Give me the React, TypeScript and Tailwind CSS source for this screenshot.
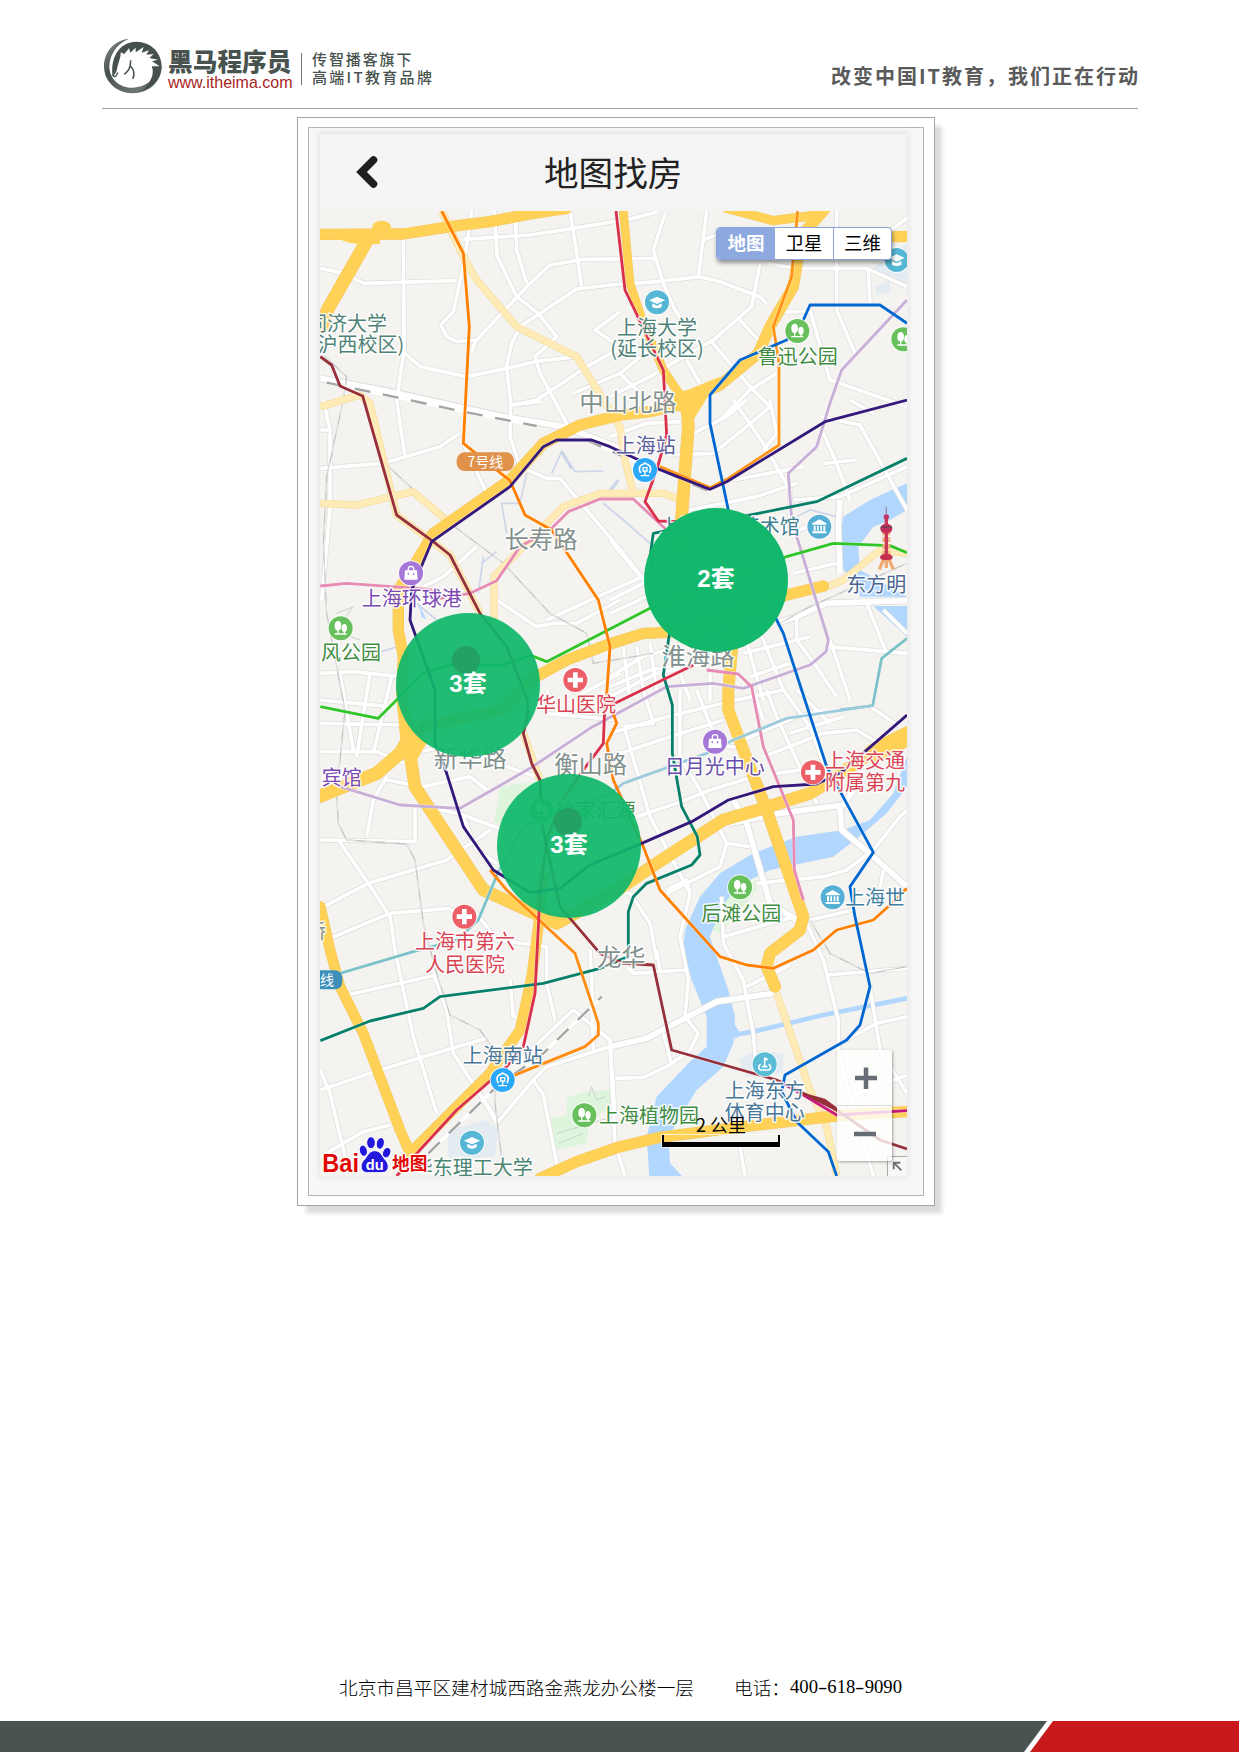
import React from "react";

const SANS = '"Noto Sans CJK SC", sans-serif';

type Pt = string;

/* Map drawing units: three per pixel. */

const water: Pt[] = [
  "1851,1940 1810,2050 1740,2130 1660,2160 1520,2180 1390,2230 1290,2290 1230,2360 1185,2460 1178,2530 1190,2550 1205,2610 1250,2720 1250,2810 1195,2860 1100,2960 1070,3080 1078,3200 1178,3200 1140,3160 1135,3080 1220,2940 1300,2870 1330,2800 1335,2720 1315,2640 1280,2540 1260,2480 1290,2400 1340,2330 1440,2280 1630,2240 1720,2170 1790,2110 1851,2030",
  "1851,1120 1740,1170 1660,1220 1648,1290 1660,1380 1700,1410 1710,1460 1851,1460 1800,1430 1710,1380 1705,1310 1750,1250 1800,1230 1851,1200",
  "1750,1488 1851,1488 1851,1580",
];

const greens: Pt[] = [
  "630,2030 760,2010 800,2150 612,2140",
  "780,3025 830,3015 830,2965 880,2945 960,2940 965,3000 900,3020 890,3100 800,3120",
  "1240,2450 1310,2360 1400,2310 1400,2340 1290,2470",
];
const campuses: Pt[] = [
  "475,3060 590,3030 625,3060 615,3140 475,3150",
  "1345,2850 1400,2820 1480,2830 1480,2890 1370,2900",
  "1740,480 1851,400 1851,520 1760,490",
  "1755,530 1800,510 1800,550 1760,555",
];

const minor: Pt[] = [
  "545,303 525,440 500,560 490,605 452,645 470,680 500,695 555,690",
  "612,303 622,440 680,560 745,610 800,680 735,740 750,790 830,940 820,950",
  "677,335 680,420 710,520",
  "840,303 855,400 875,530",
  "520,388 610,382 720,375 850,355 1000,330",
  "340,380 342,720 325,840 320,870 345,1040",
  "91,475 160,490 222,520 500,512",
  "545,730 555,695 715,525 780,465 880,448 1100,445",
  "960,525 860,537 690,650 665,700 650,770 662,880 660,980 690,1070 770,1105 810,1105 1000,1330 1070,1420",
  "345,730 390,770 530,800 650,775 735,755 860,740",
  "990,605 915,660 990,710",
  "670,885 740,870 890,770 990,715",
  "850,850 990,790 1090,710",
  "960,525 1100,515 1230,500 1290,515 1410,560 1430,580",
  "1010,330 1105,305",
  "1125,310 1090,420 1120,520 1155,600 1190,650",
  "1250,303 1225,500",
  "1240,390 1290,370",
  "1410,460 1385,590 1270,690 1180,740 1080,800 960,860",
  "1345,625 1405,690",
  "1260,690 1380,830 1440,890",
  "1430,460 1520,475 1630,475 1730,475 1851,530",
  "1640,303 1640,600 1695,730",
  "1735,480 1740,580",
  "1851,325 1790,370",
  "1560,600 1620,810 1851,890",
  "990,790 1040,840",
  "1190,750 1230,820",
  "1290,930 1330,890 1380,840 1460,790",
  "1460,605 1560,605",
  "91,1075 280,1060 450,1010 510,970",
  "100,870 120,960 120,1200 95,1470",
  "91,960 115,960",
  "660,885 750,875",
  "520,1000 590,1150",
  "400,1430 460,1400 560,1310",
  "620,1470 740,1550 790,1540 860,1540 990,1470",
  "770,1530 990,1430 1080,1390",
  "91,1690 190,1685 330,1700",
  "770,1740 800,1800 950,1810",
  "990,1690 860,1760",
  "960,980 1070,940 1170,935",
  "1210,970 1310,920 1370,870",
  "1330,870 1420,1000 1500,1140 1500,1230",
  "1130,1035 1270,1030 1370,950 1440,890",
  "1440,870 1460,970 1420,1020",
  "1590,920 1710,945 1790,1090 1851,1200",
  "1200,1200 1400,1160 1520,1120",
  "1330,1110 1540,1070",
  "1600,970 1640,1060 1680,1170",
  "1510,1170 1650,1160 1851,1070",
  "1600,1060 1700,1050",
  "1500,1270 1580,1240",
  "1510,1390 1640,1360",
  "1680,870 1750,910",
  "1520,1520 1520,1590 1580,1670 1640,1760",
  "1610,1610 1851,1630",
  "1620,1590 1680,1770",
  "1730,1480 1790,1630",
  "1780,1500 1851,1570",
  "960,1470 1080,1410",
  "960,1510 1070,1460",
  "960,1290 1060,1410",
  "960,1700 1060,1640 1160,1610",
  "960,1730 1080,1680 1250,1650",
  "1000,1610 1020,1770",
  "1040,1610 1060,1740",
  "1080,1600 1100,1740",
  "1160,1660 1200,1770",
  "1260,1690 1260,1770",
  "1360,1560 1420,1770",
  "1400,1540 1480,1740",
  "1360,1630 1560,1580",
  "1380,1700 1500,1660",
  "960,1760 1100,1690 1340,1640",
  "150,1690 190,1920",
  "240,1690 200,1940",
  "305,1700 250,1930",
  "91,1840 340,1845",
  "91,1770 300,1790",
  "91,1925 260,1925 340,1960",
  "290,2000 250,2070 230,2180",
  "91,2190 375,2195 375,2095",
  "145,2190 235,2320 300,2420 315,2520 340,2640 370,2780 440,3010",
  "91,2395 235,2320 470,2250 600,2160",
  "120,2485 300,2410 480,2395",
  "410,2090 520,2115 640,2160",
  "370,1930 480,1905 620,1960 740,2000",
  "290,2010 400,2030 540,2000 590,2040",
  "480,2400 560,2410 620,2490 770,2510 770,2620 795,2730",
  "520,2120 560,2220 620,2260",
  "760,1810 990,1830",
  "960,1870 1130,1820 1340,1770 1480,1740",
  "1005,1860 1080,2120 1200,2350",
  "1060,1740 1090,1840 1000,1850",
  "960,1940 1140,1880 1300,1830",
  "1170,1740 1170,1940 1230,2040 1310,2200",
  "1220,1740 1290,1920",
  "1040,2120 1160,2080 1260,2040 1390,2000",
  "1280,1910 1360,1910",
  "1360,1890 1520,1820 1600,1800",
  "1390,1740 1420,1830",
  "1430,1740 1460,1820 1580,2080",
  "1480,1740 1560,1850 1600,1960",
  "1520,1740 1620,1840",
  "1500,1870 1660,1820",
  "1420,1940 1600,1870 1700,1860 1800,1920",
  "1460,1990 1600,1970",
  "1310,2200 1380,2210",
  "960,2340 1020,2350 1080,2440 1100,2550",
  "1130,2340 1190,2310 1200,2350 1170,2480 1195,2610 1185,2720 1225,2770 1200,2820 1140,2865 1060,2902 975,2905",
  "1130,2350 1290,2270 1310,2200",
  "1400,2320 1600,2300 1670,2280 1750,2220 1830,2120 1851,2100",
  "1300,2480 1510,2420",
  "1295,2360 1300,2500 1360,2610 1390,2770 1400,2900",
  "1560,2430 1690,2400",
  "1550,2440 1600,2550 1645,2730 1645,2820 1680,2960 1750,3198",
  "1780,2280 1770,2340",
  "1740,1790 1830,1850",
  "170,2655 440,2595",
  "91,2940 270,2880 400,2840 590,2785",
  "91,2880 120,2950 165,3140 170,3198",
  "91,3140 220,3065 300,3045",
  "430,2590 470,2700 490,2830 620,3030",
  "575,2960 620,3040 730,2910 760,2955 800,3160 810,3198",
  "730,2910 770,2870 990,2800",
  "660,2610 670,2720 690,2720",
  "690,2850 850,2700 960,2790 975,3020",
  "900,2520 905,2600 910,2820",
  "960,2810 975,3100 1005,3198",
  "1010,2570 1030,2590 1185,2580",
  "1100,2520 1110,2580",
  "1370,2630 1500,2565",
  "1610,2595 1851,2575",
  "1740,2630 1770,2820 1851,2950",
  "1650,2800 1760,2740 1851,2720",
  "1680,2960 1851,2895",
  "1120,2770 1145,2865",
  "1350,3110 1365,3198",
];

const wide: Pt[] = [
  "91,805 300,845 640,920 820,950 900,980 1000,1020",
  "1460,1540 1520,1520 1610,1480 1851,1472",
  "1320,2140 1470,2110 1660,2085 1720,2000",
  "1650,2090 1655,2160 1750,2240 1851,2330",
  "1330,2070 1370,2140 1440,2380 1520,2430",
  "960,2810 1070,2785 1280,2675 1450,2650",
  "1650,1170 1645,1250 1650,1390",
];

const pale: Pt[] = [
  "520,440 560,510 680,650 860,740 940,870 990,950 1005,1050 1030,1150",
  "91,1180 200,1185 370,1145 480,1240",
  "91,890 210,855 240,880 320,1215 480,1335 570,1510",
  "612,1540 612,1400 700,1310 820,1190 930,1150 1120,1150 1175,1170",
  "1600,1435 1660,1410 1770,1320 1851,1330",
  "1460,2650 1560,2940 1610,3050 1640,3198",
  "455,303 520,440",
  "700,1870 750,2010",
];

const arterial: { d: Pt; w: number }[] = [
  { d: "91,373 340,372 480,350 600,335 720,312 830,295", w: 32 },
  { d: "232,390 112,600 98,650", w: 38 },
  { d: "1310,295 1450,332 1560,318 1610,295", w: 26 },
  { d: "1600,303 1535,375 1510,530 1440,650 1405,730 1290,825 1185,870", w: 32 },
  { d: "1000,303 1020,520 1060,640 1120,780 1180,870", w: 24 },
  { d: "1190,860 1195,950 1175,1220 1165,1300", w: 36 },
  { d: "1190,880 1080,905 990,915 870,945 760,1000 660,1110 430,1270 370,1370 325,1440 325,1560 340,1640 335,1750 352,1930", w: 32 },
  { d: "365,1870 330,1930 260,1990 91,2058", w: 38 },
  { d: "355,1900 375,2030 580,2340 800,2440 990,2335 1100,2260 1300,2130 1420,2095 1560,2050 1640,2000 1740,1930 1851,1880", w: 36 },
  { d: "1750,1930 1870,1870", w: 56 },
  { d: "370,1900 400,1850 640,1800 720,1710 830,1650 950,1605 1060,1570 1200,1565 1490,1455 1600,1428", w: 32 },
  { d: "1330,1570 1315,1740 1315,1800 1360,1920 1430,2100 1540,2420 1530,2460 1440,2530 1430,2570 1455,2630", w: 34 },
  { d: "750,3205 860,3155 990,3110 1110,3082 1360,3050 1660,3015 1851,3005", w: 32 },
  { d: "91,2390 120,2520 150,2630 220,2770 330,3060 360,3130 600,2890 690,2760 725,2600 745,2450 760,2300", w: 30 },
  { d: "1800,380 1860,380", w: 32 },
];

const metro: { c: string; d: Pt }[] = [
  { c: "#c7afd8", d: "1851,570 1655,780 1620,880 1580,1010 1495,1090 1505,1230 1615,1590 1608,1625 1560,1665 1360,1735 1270,1720 1130,1730 900,1855 720,1975 510,2095 330,2085 150,2030" },
  { c: "#e58bb4", d: "91,1428 170,1420 420,1438 450,1465 540,1450 620,1412 690,1310 785,1255 835,1205 930,1167 1030,1167 1130,1260" },
  { c: "#e58bb4", d: "1250,1680 1345,1692 1385,1730 1420,1910 1510,2130 1513,2280 1540,2370" },
  { c: "#7cc2c8", d: "1851,1585 1775,1645 1748,1787 1650,1800" },
  { c: "#9dcbdc", d: "1748,1787 1490,1825 1330,1890 1250,1930 1000,2020 960,2050 700,2150 625,2285" },
  { c: "#7cc2c8", d: "625,2285 565,2430 500,2490 370,2525 150,2590" },
  { c: "#30c628", d: "91,1790 265,1825 400,1690 480,1665 640,1665 720,1635 770,1655 1080,1495 1490,1340 1630,1300 1800,1307 1851,1328" },
  { c: "#06806a", d: "1851,1045 1580,1175 1370,1217 1140,1260 1090,1270 1080,1340 1140,1560 1120,1695 1147,1785 1147,1930 1175,2090 1222,2180 1230,2235 1205,2265 1070,2320 1030,2360 1015,2405 1015,2540 930,2575 760,2620 450,2660 400,2695 240,2733 91,2792" },
  { c: "#ff8000", d: "455,303 520,430 538,650 520,1000 660,1112 705,1215 785,1260 925,1470 960,1610 950,1755 980,1840 950,1900 970,2010 1060,2210 1110,2340 1290,2540 1370,2565 1450,2575 1570,2520 1640,2460 1750,2430 1800,2385 1851,2335" },
  { c: "#ff9419", d: "1523,303 1505,500 1450,650 1467,760 1467,1005 1310,1108 1260,1133 1110,1070" },
  { c: "#ff8c10", d: "600,2280 650,2340 855,2530 925,2740 925,2775 885,2810 700,2885 640,2910" },
  { c: "#d9304c", d: "978,303 1005,540 1120,780 1130,975 1100,1080 1065,1175 1105,1233 1160,1235" },
  { c: "#d9304c", d: "1210,1665 975,1780 945,1770 940,1900 880,1980 810,2080 770,2190 750,2350 735,2650 700,2810 650,2870 500,3000 385,3125 320,3198" },
  { c: "#c9197f", d: "1470,2915 1545,2958 1640,3015 1851,3002" },
  { c: "#97303a", d: "91,740 125,765 150,828 218,858 320,1215 430,1295 480,1335 570,1510 650,1610 712,1770 714,1810 700,1870 725,1960 750,2010 755,2140 810,2390 930,2530 1000,2560 1090,2565 1145,2820 1460,2910 1540,2950 1640,3000 1770,3090 1851,3117" },
  { c: "#0067d0", d: "1851,640 1770,585 1560,585 1540,630 1490,690 1350,750 1260,855 1260,940 1315,1200 1460,1530 1480,1570 1535,1740 1610,1970 1750,2227 1680,2330 1695,2420 1740,2630 1710,2745 1670,2790 1485,2895 1475,2945 1520,3035 1615,3125 1640,3198" },
  { c: "#34187a", d: "1851,870 1605,935 1310,1115 1260,1138 1100,1075 960,1010 905,990 800,990 760,1010 660,1130 425,1295 365,1440 360,1530 435,1740 435,1900 470,1990 520,2150 610,2280 720,2348 810,2335 900,2265 1055,2200 1205,2135 1315,2070 1450,2030 1580,2022 1650,1990 1851,1815" },
];

const rails: Pt[] = [
  "110,818 320,862 520,905 740,948",
  "890,990 1000,1040 1110,1080 1260,1145",
  "415,3130 620,2930 760,2830 935,2660",
];
const thinRails: Pt[] = [
  "100,735 170,800 160,870 110,1100 100,1300 110,1510 165,1800 140,2050 145,2140 170,2190 350,2202 375,2250 400,2440 440,2590 480,2715 570,2760 620,2830 615,2980 640,3190",
  "290,1065 480,1240 640,1360 780,1510 890,1570 910,1660 1090,1630",
  "1460,1545 1560,1490 1851,1360",
  "1560,2430 1620,2530 1740,2590 1851,2570",
];

type IconKind = "school" | "park" | "bag" | "hospital" | "museum" | "train" | "sport";

const ICON_FILL: Record<IconKind, string> = {
  school: "#56b7d5",
  park: "#67c05c",
  bag: "#a578d8",
  hospital: "#ec5f68",
  museum: "#56b0d6",
  train: "#2ba9f8",
  sport: "#5bbcd6",
};

function Glyph({ kind }: { kind: IconKind }) {
  switch (kind) {
    case "school":
      return (
        <g fill="#fff">
          <path d="M0-17 24-6 0 5-24-6Z" />
          <path d="M-14 3 0 10 14 3V14Q0 22-14 14Z" />
        </g>
      );
    case "park":
      return (
        <g fill="#fff">
          <ellipse cx="-8" cy="-8" rx="10" ry="14" />
          <ellipse cx="11" cy="-1" rx="8" ry="12" />
          <path d="M-10 0h4v17h-4zM9 6h4v11H9zM-18 15h36v4h-36z" />
        </g>
      );
    case "bag":
      return (
        <g>
          <path d="M-8-8v-5a8 8 0 0 1 16 0v5" fill="none" stroke="#fff" strokeWidth="4" />
          <path d="M-18-9h36l2 28h-40z" fill="#fff" />
          <path d="M-8-2v6M8-2v6" stroke="#a578d8" strokeWidth="4" />
        </g>
      );
    case "hospital":
      return <path d="M-7-23H7V-7H23V7H7V23H-7V7H-23V-7H-7Z" fill="#fff" />;
    case "museum":
      return (
        <g fill="#fff">
          <path d="M0-22 21-10v4h-42v-4zM-17-3h6v15h-6zM-7-3h5v15h-5zM3-3h5v15H3zM12-3h6v15h-6zM-21 14h42v6h-42z" />
        </g>
      );
    case "train":
      return (
        <g fill="none" stroke="#fff" strokeWidth="5">
          <path d="M-13 9C-22-8-14-14-6-17L0-21 6-17C14-14 22-8 13 9" />
          <path d="M-6 3V-7H6V3ZM0 4V16M-13 17H13" strokeWidth="4" />
        </g>
      );
    case "sport":
      return (
        <g fill="none" stroke="#fff" strokeWidth="5">
          <path d="M-12 0C-20 4-20 16-10 17H10C20 16 20 4 12 0" />
          <path d="M-8 7H8M0 7V-20" />
          <path d="M0-22 12-15 0-9Z" fill="#fff" stroke="none" />
        </g>
      );
  }
}

const icons: [IconKind, number, number][] = [
  ["school", 1101, 577],
  ["park", 1522, 663],
  ["park", 1840, 688],
  ["school", 1820, 450],
  ["train", 1065, 1080],
  ["bag", 363, 1390],
  ["park", 152, 1555],
  ["hospital", 856, 1710],
  ["museum", 1588, 1250],
  ["park", 755, 2100],
  ["bag", 1275, 1895],
  ["hospital", 1569, 1987],
  ["park", 1350, 2332],
  ["museum", 1628, 2362],
  ["hospital", 523, 2420],
  ["train", 638, 2910],
  ["park", 883, 3016],
  ["sport", 1424, 2863],
  ["school", 546, 3098],
];

type Label = { t: string; x: number; y: number; c: string; a?: "start" | "middle" | "end"; s?: number; clip?: string };
const TEAL = "#4f8279";
const GREY = "#82918e";
const GREEN = "#3f8c42";
const PURPLE = "#7a49b4";
const RED = "#da4354";
const STEEL = "#48779a";

const labels: Label[] = [
  { t: "同济大学", x: 291, y: 640, c: TEAL, a: "end" },
  { t: "(沪西校区)", x: 343, y: 703, c: TEAL, a: "end" },
  { t: "上海大学", x: 1101, y: 653, c: TEAL },
  { t: "(延长校区)", x: 1101, y: 716, c: TEAL },
  { t: "鲁迅公园", x: 1523, y: 740, c: GREEN },
  { t: "中山北路", x: 1014, y: 876, c: GREY, s: 73 },
  { t: "上海站", x: 1067, y: 1006, c: "#5b5f9c" },
  { t: "长寿路", x: 753, y: 1286, c: GREY, s: 73 },
  { t: "上海环球港", x: 365, y: 1467, c: PURPLE },
  { t: "风公园", x: 93, y: 1629, c: GREEN, a: "start" },
  { t: "华山医院", x: 858, y: 1785, c: RED },
  { t: "淮海路", x: 1224, y: 1638, c: GREY, s: 73 },
  { t: "上海当代艺术馆", x: 1529, y: 1250, c: "#3f7f92", a: "end" },
  { t: "东方明珠", x: 1669, y: 1424, c: "#4a6590", a: "start" },
  { t: "新华路", x: 541, y: 1943, c: GREY, s: 73 },
  { t: "衡山路", x: 902, y: 1961, c: GREY, s: 73 },
  { t: "宾馆", x: 95, y: 2004, c: PURPLE, a: "start" },
  { t: "徐家汇源", x: 1037, y: 2103, c: GREEN, a: "end" },
  { t: "日月光中心", x: 1274, y: 1971, c: "#6a4fae" },
  { t: "上海交通", x: 1605, y: 1953, c: RED, a: "start" },
  { t: "附属第九", x: 1605, y: 2019, c: RED, a: "start" },
  { t: "后滩公园", x: 1354, y: 2411, c: GREEN },
  { t: "上海世", x: 1665, y: 2363, c: "#3f7fa0", a: "start" },
  { t: "上海市第六", x: 525, y: 2496, c: RED },
  { t: "人民医院", x: 525, y: 2563, c: RED },
  { t: "龙华", x: 994, y: 2540, c: GREY, s: 73 },
  { t: "上海南站", x: 638, y: 2838, c: STEEL },
  { t: "上海植物园", x: 1077, y: 3018, c: GREEN },
  { t: "上海东方", x: 1424, y: 2942, c: STEEL },
  { t: "体育中心", x: 1424, y: 3009, c: STEEL },
  { t: "华东理工大学", x: 728, y: 3174, c: "#4a8573", a: "end", clip: "url(#campus-label)" },
  { t: "桥", x: 108, y: 2465, c: GREY, a: "end" },
];

function Lines({ items, color, w, dash }: { items: Pt[]; color: string; w: number; dash?: string }) {
  return (
    <g fill="none" stroke={color} strokeWidth={w} strokeDasharray={dash} strokeLinejoin="round">
      {items.map((p) => (
        <polyline key={p} points={p} />
      ))}
    </g>
  );
}

function Tower() {
  return (
    <g>
      <path d="M1789 1190V1230" stroke="#9a8ba5" strokeWidth="4" />
      <circle cx="1789" cy="1221" r="8" fill="#c8346a" />
      <path d="M1789 1262V1334" stroke="#efb27f" strokeWidth="24" strokeDasharray="14 6" />
      <path d="M1789 1225V1350" stroke="#c83a58" strokeWidth="10" />
      <ellipse cx="1789" cy="1256" rx="18" ry="15" fill="#c42f5c" />
      <path d="M1772 1252h34" stroke="#6d4257" strokeWidth="5" />
      <ellipse cx="1789" cy="1342" rx="19" ry="11" fill="#c42f4c" />
      <path d="M1780 1350 1768 1378M1798 1350 1810 1378M1789 1350V1374" stroke="#f0ab72" strokeWidth="10" />
    </g>
  );
}

function BaiduLogo() {
  return (
    <g>
      <g fontWeight="bold" stroke="#fff" strokeWidth="8" strokeLinejoin="round" style={{ paintOrder: "stroke" }}>
        <text x="97" y="3185" fontSize="75" fill="#e10602" fontFamily='"Liberation Sans", sans-serif' textLength="110" lengthAdjust="spacingAndGlyphs" strokeWidth="6">
          Bai
        </text>
        <text x="306" y="3180" fontSize="53" fill="#e10602" fontFamily={SANS}>
          地图
        </text>
      </g>
      <g fill="#2319dc" stroke="#fff" strokeWidth="3">
        <ellipse cx="220" cy="3122" rx="12" ry="17" transform="rotate(-15 220 3122)" />
        <ellipse cx="243" cy="3098" rx="13" ry="18" />
        <ellipse cx="271" cy="3100" rx="12" ry="18" transform="rotate(12 271 3100)" />
        <ellipse cx="290" cy="3128" rx="12" ry="16" transform="rotate(20 290 3128)" />
        <path d="M254 3122C274 3122 276 3140 288 3152 300 3166 296 3188 276 3188 262 3188 246 3188 232 3188 212 3188 208 3166 220 3152 232 3140 236 3122 254 3122Z" />
      </g>
      <text x="254" y="3180" fontSize="44" fontWeight="bold" fill="#fff" textAnchor="middle" fontFamily='"Liberation Sans", sans-serif'>
        du
      </text>
    </g>
  );
}

function CityMap() {
  return (
    <svg className="block h-[965px] w-[587px]" viewBox="90 303 1761 2895">
      <defs>
        <clipPath id="campus-label">
          <rect x="404" y="3100" width="400" height="100" />
        </clipPath>
      </defs>
      <rect x="90" y="303" width="1761" height="2895" fill="#f4f3f0" />
      <g fill="#e4ecf1">{campuses.map((p) => <polygon key={p} points={p} />)}</g>
      <g fill="#dff4dd">{greens.map((p) => <polygon key={p} points={p} />)}</g>
      <g fill="#b1d7ff">{water.map((p) => <polygon key={p} points={p} />)}</g>
      <polyline points="1330,2775 1390,2765 1600,2715 1851,2665" fill="none" stroke="#b1d7ff" strokeWidth="14" />
      <polygon points="1328,2735 1352,2770 1334,2790" fill="#b1d7ff" />
      <g fill="none" stroke="#ccd5ea" strokeWidth="5">
        <path d="M785 1090 815 1025 855 1085 940 1083M710 1090 690 1180 635 1180 650 1270M575 1360 620 1325M580 1340 565 1450M380 1480 440 1530M275 1625 330 1608M940 1180 1000 1230 1080 1300" />
        <path d="M815 1025 845 1075" strokeWidth="10" />
        <path d="M985 1110 955 1150" strokeWidth="10" />
        <path d="M1520 1220 1560 1200 1650 1222" />
      </g>
      <path d="M385 1480 410 1530 395 1520Z" fill="#b1d7ff" />
      <g fill="none" stroke="#c9d3c9" strokeWidth="3">
        <path d="M140 1510 190 1490 160 1530M180 1580 210 1590M800 3070 970 3020M805 3100 880 3070M895 2960 905 2930 920 2970 945 2960" />
      </g>
      <Lines items={minor} color="#dddcda" w={15} />
      <Lines items={wide} color="#dddcda" w={22} />
      <Lines items={minor} color="#ffffff" w={11} />
      <Lines items={wide} color="#ffffff" w={17} />
      <Lines items={thinRails} color="#c4c6c6" w={4} />
      <Lines items={thinRails} color="#f7f7f5" w={2} dash="30 30" />
      <Lines items={rails} color="#ffffff" w={9} />
      <Lines items={rails} color="#a3a5a5" w={7} dash="48 38" />
      <Lines items={pale} color="#f6dc9c" w={22} />
      <Lines items={pale} color="#ffebb5" w={18} />
      <g fill="none" strokeLinejoin="round" strokeLinecap="round">
        {arterial.map((r) => <polyline key={r.d} points={r.d} stroke="#f3c65c" strokeWidth={r.w + 2} />)}
        {arterial.map((r) => <polyline key={r.d} points={r.d} stroke="#ffd257" strokeWidth={r.w - 1} />)}
      </g>
      <ellipse cx="275" cy="352" rx="28" ry="20" fill="#ffd257" />
      <path d="M150 375H270V402H210Q170 400 150 388Z" fill="#ffd257" />
      <path d="M335 1930 350 1800 410 1900 375 1960Z" fill="#ffd257" />
      <path d="M1130 780 1180 845 1290 800 1210 930 1160 900Z" fill="#ffd257" />
      <g fill="none" strokeLinejoin="round">
        {metro.map((m) => <polyline key={m.d} points={m.d} stroke="#fff" strokeOpacity="0.4" strokeWidth="12" />)}
        {metro.map((m) => <polyline key={m.d} points={m.d} stroke={m.c} strokeWidth="8.5" />)}
      </g>
      <path d="M1540 2948 1605 2966 1640 2992 1640 3002Z" fill="#97303a" />
      <Tower />

      <rect x="500" y="1027" width="172" height="56" rx="24" fill="#e0914a" />
      <text x="586" y="1071" fontSize="42" fill="#fff" textAnchor="middle" fontFamily={SANS}>7号线</text>
      <rect x="40" y="2581" width="117" height="57" rx="22" fill="#3c90ba" />
      <text x="132" y="2626" fontSize="42" fill="#fff" textAnchor="end" fontFamily={SANS}>线</text>

      {labels.map((l) => {
        const s = l.s ?? 60;
        return (
          <text
            key={l.t + l.x}
            x={l.x}
            y={l.y + s * 0.37}
            fontSize={s}
            fill={l.c}
            textAnchor={l.a ?? "middle"}
            stroke="#fff"
            strokeOpacity="0.85"
            strokeWidth="9"
            strokeLinejoin="round"
            fontFamily={SANS}
            clipPath={l.clip}
            style={{ paintOrder: "stroke" }}
          >
            {l.t}
          </text>
        );
      })}
      {icons.map(([kind, x, y]) => (
        <g key={`${x}-${y}`} transform={`translate(${x} ${y})`}>
          <circle r="39" fill="#fff" fillOpacity="0.8" />
          <circle r="36" fill={ICON_FILL[kind]} />
          <Glyph kind={kind} />
        </g>
      ))}
      <BaiduLogo />
    </svg>
  );
}

function Cluster({ label, place, dot }: { label: string; place: string; dot?: string }) {
  return (
    <button
      className={`absolute flex h-36 w-36 items-center justify-center rounded-full pb-[3px] font-['Liberation_Sans','Noto_Sans_CJK_SC',sans-serif] text-2xl leading-none font-bold text-white ${place}`}
    >
      {dot && <span className={`absolute h-7 w-7 rounded-full bg-[#23a163] ${dot}`} />}
      <span className="relative">{label}</span>
    </button>
  );
}

function HorseLogo() {
  return (
    <svg className="ml-[1px] h-[60px] w-[60px]" viewBox="42 50 180 180">
      <defs>
        <linearGradient id="ring" x1="0" y1="0" x2="1" y2="1">
          <stop offset="0" stopColor="#8a9190" />
          <stop offset="0.35" stopColor="#46514f" />
          <stop offset="0.75" stopColor="#6d7574" />
          <stop offset="1" stopColor="#3f4a48" />
        </linearGradient>
      </defs>
      <path d="M120 55C75 60 45 95 45 138 45 184 83 219 131 219 180 219 218 184 218 138 195 180 170 200 132 202 95 203 64 180 61 142 60 110 78 72 120 55Z" fill="url(#ring)" />
      <path d="M71 168C64 120 84 66 142 64 186 64 218 98 218 138 216 175 195 198 160 212 190 180 196 160 188 138Z" fill="#46514f" />
      <path d="M71 168C80 160 82 154 84 146 88 126 96 112 95 96L106 101 120 84 124 97 140 82 140 96 164 80 158 97 180 90 172 103 194 101 181 113 207 118 189 123 212 138 188 138C196 165 178 192 140 198 105 200 82 188 71 168Z" fill="#fff" />
      <path d="M71 163C76 174 83 168 86 156M125 120C125 145 118 152 106 162M125 138C136 150 137 164 131 176" fill="none" stroke="#46514f" strokeWidth="4.500" />
    </svg>
  );
}

function PageHeader() {
  return (
    <header className="mx-[102px] flex h-[109px] items-start justify-between border-b-[1.5px] border-[#a6a6a6] pt-[37px]">
      <div className="flex items-start">
        <HorseLogo />
        <div className="ml-[5px] flex w-[124px] flex-col pt-[11px] text-[#48534f]">
          <span className="h-[27px] text-[24.7px] leading-[25px] font-black whitespace-nowrap">黑马程序员</span>
          <span className="font-['Liberation_Sans',sans-serif] text-[16px] leading-[16px] whitespace-nowrap text-[#a9251f]">www.itheima.com</span>
        </div>
        <div className="mt-[16px] ml-[9px] h-[32px] w-px bg-[#6d7674]" />
        <div className="ml-[10px] flex flex-col pt-[13px] text-[15px] leading-[18px] font-medium tracking-[1.9px] whitespace-nowrap text-[#48534f]">
          <span>传智播客旗下</span>
          <span className="tracking-[2.3px]">高端IT教育品牌</span>
        </div>
      </div>
      <p className="-mr-[2px] pt-[27px] text-[20px] leading-[24px] font-bold tracking-[2px] whitespace-nowrap text-[#5a5a5a]">改变中国IT教育，我们正在行动</p>
    </header>
  );
}

export default function App() {
  return (
    <div className="flex h-[1752px] w-[1240px] flex-col overflow-hidden bg-white font-['Noto_Sans_CJK_SC',sans-serif]">
      <PageHeader />

      <main className="mt-2 ml-[297px] h-[1089px] w-[638px] border border-[#a5a5a5] bg-white p-[9px] pl-[10px] shadow-[8px_8px_4px_-1px_#dcdcdc]">
        <div className="h-[1069px] w-[616px] border border-[#b4b4b4] bg-[#f7f7f7] pt-[5px] pl-[11px]">
          <div className="w-[587px] shadow-[0_0_6px_1px_#e3e3e3]">
            <div className="flex h-[78px] items-center border-t border-[#e6e6e6] bg-[#f4f4f4]">
              <svg className="ml-[35px] h-9 w-6" viewBox="0 0 24 36">
                <path d="M18.500 5 6.500 17 18.500 29" fill="none" stroke="#1f1f1f" strokeWidth="7.500" strokeLinecap="round" />
              </svg>
              <h1 className="ml-[165px] pb-[3px] text-[34.6px] leading-none font-normal text-[#222]">地图找房</h1>
            </div>
            <div className="relative h-[965px] w-[587px] overflow-hidden">
              <CityMap />

              <Cluster label="3套" place="left-[76px] top-[402px] bg-[#10b76b]/93" dot="left-[56px] top-[33px]" />
              <Cluster label="3套" place="left-[177px] top-[563px] bg-[#10b76b]/93" dot="left-[57px] top-[34px]" />
              <Cluster label="2套" place="left-[324px] top-[297px] bg-[#10b76b]/99" />

              <div className="absolute top-4 left-[396px] flex h-[33px] w-[176px] overflow-hidden rounded-[4px] border border-[#8ba4dc] bg-white text-[18.5px] leading-[28px] text-black shadow-[1px_3px_4px_#0006]">
                <span className="w-[58px] bg-[#8ea8e0] text-center font-bold text-white">地图</span>
                <span className="w-[58px] text-center">卫星</span>
                <span className="flex-1 border-l border-[#8ba4dc] text-center">三维</span>
              </div>

              <div className="absolute top-[904px] left-[342px] w-[118px] text-center">
                <div className="h-[20px] text-[18px] leading-[19px] text-black">2 公里</div>
                <div className="h-[12px] border-x-2 border-b-[5px] border-black outline-1 outline-white/70" />
              </div>

              <div className="absolute top-[945px] left-[567px] h-5 w-5 border-t border-l border-[#aaa] bg-[#f7f7f5]">
                <svg className="h-full w-full" viewBox="0 0 20 20">
                  <path d="M6 13V6H13M6 6 14 14" fill="none" stroke="#6d7074" strokeWidth="2" />
                </svg>
              </div>

              <div className="absolute top-[839px] left-[517px] flex h-[111px] w-[55px] flex-col rounded-[3px] bg-white/80 shadow-[1px_1px_3px_#0005]">
                <span className="flex flex-1 items-center justify-center border-b border-[#ddd]">
                  <svg className="h-6 w-6" viewBox="0 0 24 24">
                    <path d="M13 1.500V23M2 12H24" stroke="#676d74" strokeWidth="4.500" />
                  </svg>
                </span>
                <span className="flex flex-1 items-center justify-center">
                  <svg className="h-6 w-6" viewBox="0 0 24 24">
                    <path d="M1 12H23" stroke="#676d74" strokeWidth="4.500" />
                  </svg>
                </span>
              </div>
            </div>
          </div>
        </div>
      </main>

      <footer className="mt-auto">
        <div className="ml-[339px] flex h-6 items-center text-[18.7px] leading-6 font-light whitespace-nowrap text-black">
          <span className="w-[395px]">北京市昌平区建材城西路金燕龙办公楼一层</span>
          <span className="w-[56px]">电话：</span>
          <span className="flex font-['Liberation_Serif',serif] text-[18.7px]">
            400<span className="w-[9.3px] scale-x-150 text-center">-</span>618<span className="w-[9.3px] scale-x-150 text-center">-</span>9090
          </span>
        </div>
        <div className="mt-[22px] flex h-[31px]">
          <div className="w-[1047px] bg-[#495351] [clip-path:polygon(0_0,100%_0,1024px_100%,0_100%)]" />
          <div className="-ml-[17px] w-[209px] bg-[#c81a1b] [clip-path:polygon(23px_0,100%_0,100%_100%,0_100%)]" />
        </div>
      </footer>
    </div>
  );
}
